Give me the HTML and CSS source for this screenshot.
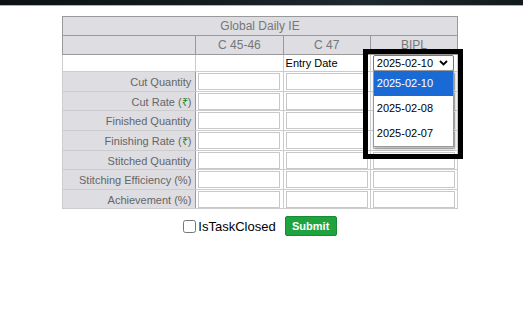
FILE: index.html
```html
<!DOCTYPE html>
<html lang="en">
<head>
    <meta charset="UTF-8">
    <meta name="viewport" content="width=device-width, initial-scale=1.0">
    <title>Global Daily IE</title>
    <link rel="stylesheet" href="styles.css">
</head>
<body>

    <div class="top-strip"></div>

    <div class="page">
        <table class="ie-table">
            <colgroup>
                <col class="col-label">
                <col class="col-unit">
                <col class="col-unit">
                <col class="col-unit">
            </colgroup>
            <thead>
                <tr>
                    <th colspan="4" class="title">Global Daily IE</th>
                </tr>
                <tr>
                    <th></th>
                    <th>C 45-46</th>
                    <th>C 47</th>
                    <th>BIPL</th>
                </tr>
            </thead>
            <tbody>
                <tr class="date-row">
                    <td></td>
                    <td></td>
                    <td class="entry-label">Entry Date</td>
                    <td>
                        <div class="select-wrap">
                            <select class="date-select">
                                <option>2025-02-10</option>
                                <option>2025-02-08</option>
                                <option>2025-02-07</option>
                            </select>
                            <svg class="chevron" width="9" height="6" viewBox="0 0 9 6">
                                <path d="M1 1 L4.5 4.5 L8 1" fill="none" stroke="#000" stroke-width="1.8"/>
                            </svg>
                            <ul class="date-list">
                                <li class="active">2025-02-10</li>
                                <li>2025-02-08</li>
                                <li>2025-02-07</li>
                            </ul>
                            <div class="highlight-frame"></div>
                        </div>
                    </td>
                </tr>
                <tr>
                    <th class="label">Cut Quantity</th>
                    <td><input type="text"></td>
                    <td><input type="text"></td>
                    <td><input type="text"></td>
                </tr>
                <tr class="tight">
                    <th class="label">Cut Rate (<span class="rupee">₹</span>)</th>
                    <td><input type="text"></td>
                    <td><input type="text"></td>
                    <td><input type="text"></td>
                </tr>
                <tr>
                    <th class="label">Finished Quantity</th>
                    <td><input type="text"></td>
                    <td><input type="text"></td>
                    <td><input type="text"></td>
                </tr>
                <tr>
                    <th class="label">Finishing Rate (<span class="rupee">₹</span>)</th>
                    <td><input type="text"></td>
                    <td><input type="text"></td>
                    <td><input type="text"></td>
                </tr>
                <tr class="tight">
                    <th class="label">Stitched Quantity</th>
                    <td><input type="text"></td>
                    <td><input type="text"></td>
                    <td><input type="text"></td>
                </tr>
                <tr>
                    <th class="label">Stitching Efficiency (%)</th>
                    <td><input type="text"></td>
                    <td><input type="text"></td>
                    <td><input type="text"></td>
                </tr>
                <tr class="tight">
                    <th class="label">Achievement (%)</th>
                    <td><input type="text"></td>
                    <td><input type="text"></td>
                    <td><input type="text"></td>
                </tr>
            </tbody>
        </table>

        <div class="actions">
            <label class="task-closed">
                <input type="checkbox">
                <span>IsTaskClosed</span>
            </label>
            <button type="button" class="submit-btn">Submit</button>
        </div>
    </div>

</body>
</html>
```

FILE: styles.css
```css
body {
    margin: 0;
    font-family: "Liberation Sans", Arial, sans-serif;
    font-size: 11px;
    color: #000;
    background-color: #fff;
}
.top-strip {
    height: 5px;
    background: linear-gradient(90deg, #0b1114 0%, #141c20 40%, #1f2a2e 70%, #11191c 100%);
    border-bottom: 1px solid #c8a8aa;
}
.page {
    padding-top: 10px;
    padding-left: 62px;
    width: 396px;
}
.ie-table {
    width: 396px;
    border-collapse: collapse;
    table-layout: fixed;
    border: 1px solid #999;
}
.col-label {
    width: 133px;
}
.col-unit {
    width: 87px;
}
.ie-table thead th {
    background-color: #dddde2;
    color: #777;
    font-size: 12px;
    font-weight: normal;
    text-align: center;
    height: 18px;
    padding: 0;
    border: 1px solid #999;
}
.ie-table td,
.ie-table tbody th {
    border: 1px solid #ccc;
    padding: 1px 2px;
    height: 17px;
}
.ie-table tr.tight td,
.ie-table tr.tight th {
    padding-bottom: 0;
}
.ie-table tbody th.label {
    background-color: #dddde2;
    color: #666;
    font-weight: normal;
    text-align: right;
    padding-right: 4px;
    border-right: 1px solid #999;
}
.rupee {
    color: #1a8a1a;
}
.date-row td {
    height: 16px;
    padding-top: 0;
    padding-bottom: 0;
    background-color: #fff;
}
.entry-label {
    color: #000;
    padding-left: 3px;
}
.ie-table input[type="text"] {
    box-sizing: border-box;
    width: 82px;
    height: 17px;
    margin: 0;
    border: 1px solid #c8c8c8;
    background-color: #fff;
    display: block;
}
.select-wrap {
    position: relative;
    width: 81px;
}
.date-select {
    -webkit-appearance: none;
    appearance: none;
    box-sizing: border-box;
    width: 81px;
    height: 16px;
    font-family: "Liberation Sans", Arial, sans-serif;
    font-size: 11px;
    line-height: 14px;
    padding: 0 0 0 3px;
    margin: 0;
    display: block;
    border: 1px solid #767676;
    border-radius: 2px;
    background-color: #fff;
    color: #000;
}
.chevron {
    position: absolute;
    top: 5px;
    right: 6px;
    pointer-events: none;
}
.date-list {
    position: absolute;
    top: 15px;
    left: 0;
    width: 79px;
    margin: 0;
    padding: 0;
    list-style: none;
    background-color: #fff;
    border: 1px solid #999;
    box-shadow: 1px 2px 3px rgba(0,0,0,0.3);
    z-index: 2;
}
.date-list li {
    height: 25px;
    line-height: 25px;
    padding-left: 3px;
    font-size: 11px;
    color: #000;
}
.date-list li.active {
    background-color: #1a6ad6;
    color: #fff;
}
.highlight-frame {
    position: absolute;
    top: -6px;
    left: -10px;
    width: 90px;
    height: 100px;
    border: 5px solid #000;
    z-index: 3;
    pointer-events: none;
}
.actions {
    display: flex;
    justify-content: center;
    align-items: center;
    gap: 9px;
    margin-top: 7px;
}
.task-closed {
    display: flex;
    align-items: center;
    font-size: 13px;
    color: #000;
}
.task-closed input {
    margin: 0 2px 0 0;
    width: 13px;
    height: 13px;
}
.submit-btn {
    background-color: #1fa33f;
    color: #fff;
    font-family: "Liberation Sans", Arial, sans-serif;
    font-weight: bold;
    font-size: 11px;
    border: 1px solid #178a33;
    border-radius: 2px;
    width: 52px;
    height: 20px;
    padding: 0;
}
```
